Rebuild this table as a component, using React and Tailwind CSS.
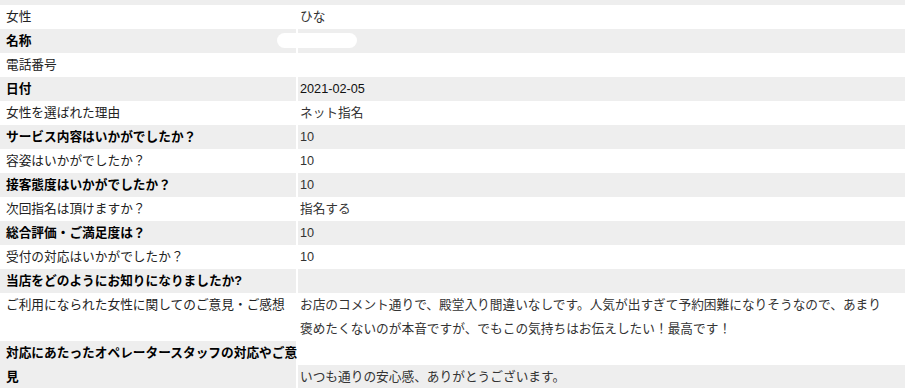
import React from "react";

const font = { fontFamily: '"Liberation Sans", "Noto Sans CJK JP", sans-serif' };

const rows = [
  { l: "女性", v: "ひな" },
  { l: "名称", v: "", mask: true },
  { l: "電話番号", v: "" },
  { l: "日付", v: "2021-02-05", dark: true },
  { l: "女性を選ばれた理由", v: "ネット指名" },
  { l: "サービス内容はいかがでしたか？", v: "10" },
  { l: "容姿はいかがでしたか？", v: "10" },
  { l: "接客態度はいかがでしたか？", v: "10" },
  { l: "次回指名は頂けますか？", v: "指名する" },
  { l: "総合評価・ご満足度は？", v: "10" },
  { l: "受付の対応はいかがでしたか？", v: "10" },
  { l: "当店をどのようにお知りになりましたか?", v: "" },
];

function Row({ r, i }) {
  const gray = i % 2 === 1;
  const bg = gray ? "bg-[#eeeeee]" : "bg-white";
  return (
    <div className="relative flex h-[24px] gap-x-[2px]">
      <div
        className={`${bg} w-[296px] shrink-0 pl-[6px] leading-[24px] whitespace-nowrap ${
          gray ? "font-bold text-black" : "text-[#222222]"
        }`}
      >
        {r.l}
      </div>
      <div
        className={`${bg} flex-1 pl-[2px] leading-[24px] whitespace-nowrap ${
          r.dark ? "text-[#111111]" : "text-[#333333]"
        }`}
      >
        {r.v}
      </div>
      {r.mask && (
        <div className="absolute left-[277px] top-[4px] h-[15px] w-[80px] rounded-full bg-white" />
      )}
    </div>
  );
}

export default function App() {
  return (
    <div className="w-[905px] h-[388px] overflow-hidden bg-white text-[12.7px]" style={font}>
      <div className="h-[5px] bg-[#eeeeee] flex gap-x-[2px]">
        <div className="w-[296px] shrink-0 bg-[#eeeeee]" />
        <div className="flex-1 bg-[#eeeeee]" />
      </div>
      {rows.map((r, i) => (
        <Row key={i} r={r} i={i} />
      ))}
      <div className="flex h-[48px] gap-x-[2px]">
        <div className="w-[296px] shrink-0 bg-white pl-[6px] leading-[24px] whitespace-nowrap text-[#222222]">
          ご利用になられた女性に関してのご意見・ご感想
        </div>
        <div className="flex-1 bg-white pl-[2px] leading-[24px] whitespace-nowrap text-[#333333]">
          お店のコメント通りで、殿堂入り間違いなしです。人気が出すぎて予約困難になりそうなので、あまり
          <br />
          褒めたくないのが本音ですが、でもこの気持ちはお伝えしたい！最高です！
        </div>
      </div>
      <div className="flex h-[48px] gap-x-[2px]">
        <div className="w-[296px] shrink-0 bg-[#eeeeee] pl-[6px] leading-[24px] whitespace-nowrap font-bold text-black">
          対応にあたったオペレータースタッフの対応やご意
          <br />
          見
        </div>
        <div className="flex flex-1 flex-col">
          <div className="h-[24px] bg-white" />
          <div className="h-[24px] bg-[#eeeeee] pl-[2px] leading-[24px] whitespace-nowrap text-[#333333]">
            いつも通りの安心感、ありがとうございます。
          </div>
        </div>
      </div>
    </div>
  );
}
